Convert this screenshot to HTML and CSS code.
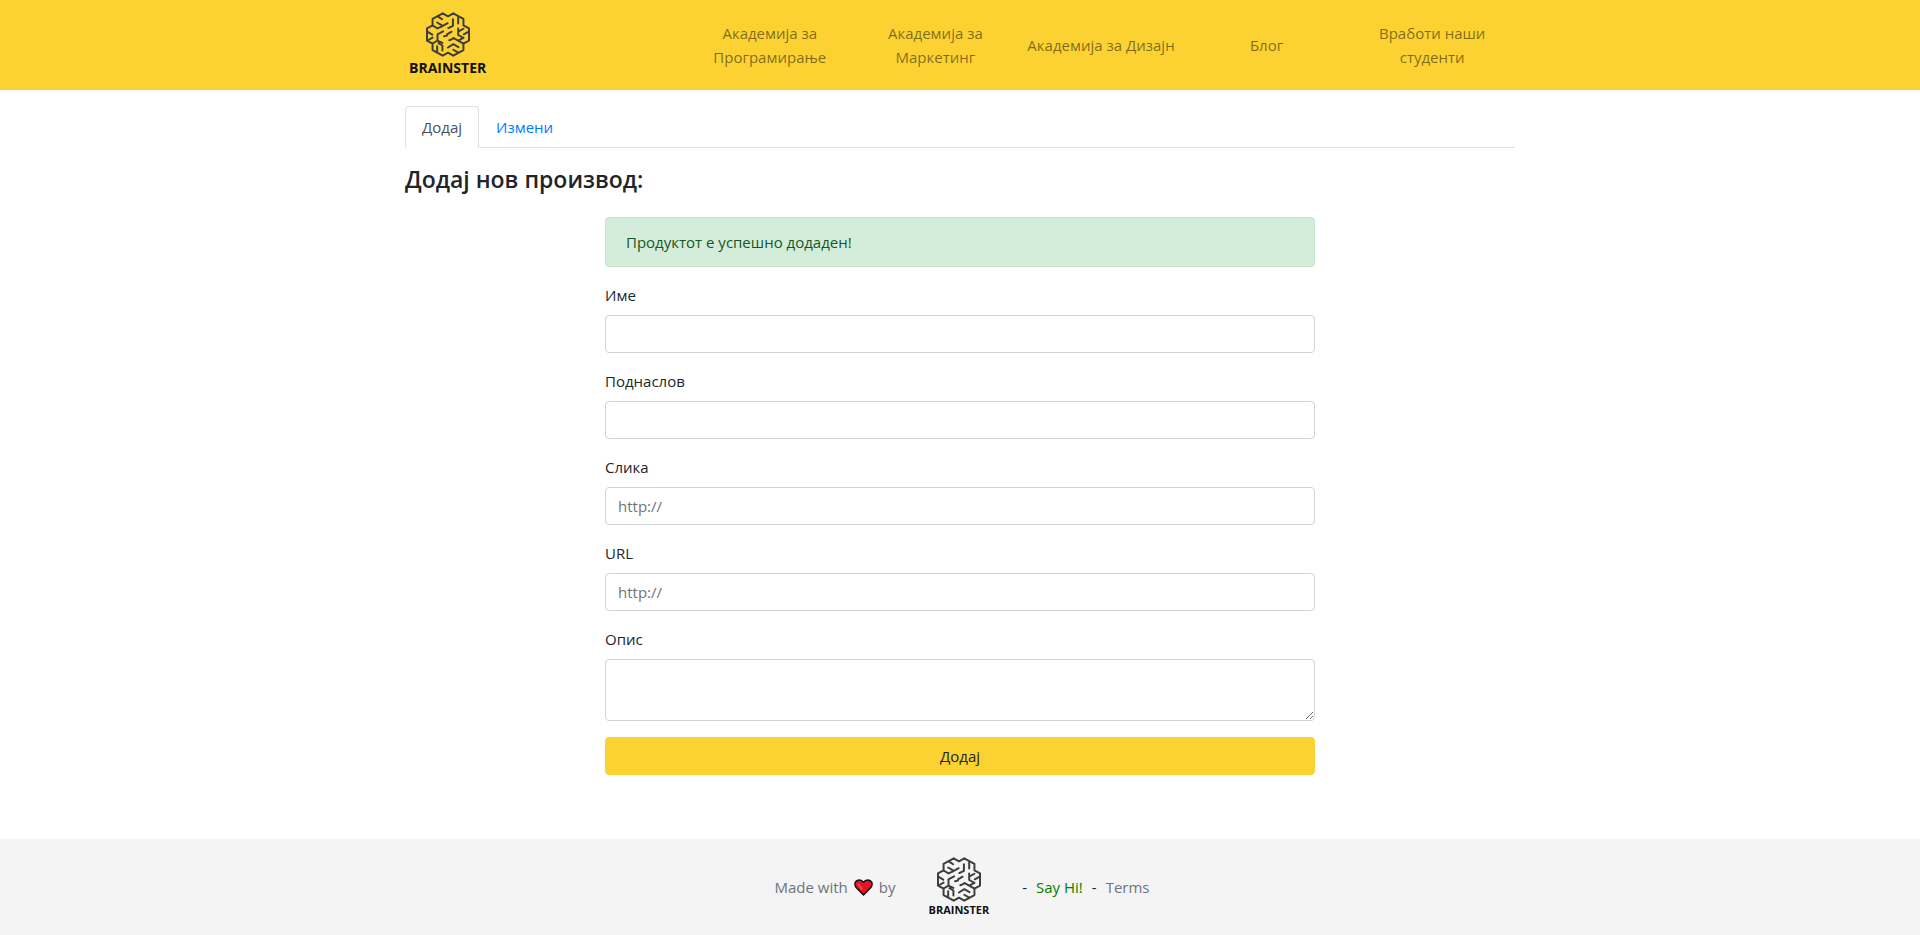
FILE: index.html
```html
<!DOCTYPE html>
<html lang="mk">
<head>
<meta charset="utf-8">
<meta name="viewport" content="width=device-width, initial-scale=1">
<title>Brainster</title>
<link rel="stylesheet" href="styles.css">
</head>
<body>
<svg class="sprite" aria-hidden="true">
  <symbol id="brain" viewBox="5 7 134 135">
    <g fill="none" stroke="#3d3d3b" stroke-width="6" stroke-linejoin="round" stroke-linecap="round">
      <path d="M56 10l16 9 16-9 31 17v20l17 9v37l-17 9v20l-31 17-16-9-16 9-31-17v-20l-17-9V56l17-9V27z"/>
      <path d="M42 20l12 8M39 38l17 10 15-8M87 28v20l-14 7M103 22v19M25 47l15 9 14-6M9 66l15 9M25 84l-14 8M25 102l15-9V74l17-9M40 93l15 7M60 80l9-2M69 74l14-8M119 57l-16 9V56M103 66v10l16 9M135 66l-15 8M119 102l-16-9 16-8M103 93l-15-8M76 92l10-4M39 110v17M55 123v-15l-12-7M72 114l16-10 16 9M88 121l14 8"/>
    </g>
  </symbol>
</svg>
<header class="topbar">
  <nav class="container topbar-inner">
    <a class="brand" href="#"><svg class="brain"><use href="#brain"/></svg><span>BRAINSTER</span></a>
    <ul class="menu">
      <li><a href="#">Академија за Програмирање</a></li>
      <li><a href="#">Академија за Маркетинг</a></li>
      <li><a href="#">Академија за Дизајн</a></li>
      <li><a href="#">Блог</a></li>
      <li><a href="#">Вработи наши студенти</a></li>
    </ul>
  </nav>
</header>
<main class="container content">
  <nav class="tabs">
    <a class="tab active" href="#">Додај</a>
    <a class="tab" href="#">Измени</a>
  </nav>
  <h1 class="title">Додај нов производ:</h1>
  <form class="form">
    <div class="alert" role="status">Продуктот е успешно додаден!</div>
    <div class="field"><label for="name">Име</label><input id="name" type="text"></div>
    <div class="field"><label for="subtitle">Поднаслов</label><input id="subtitle" type="text"></div>
    <div class="field"><label for="image">Слика</label><input id="image" type="url" placeholder="http://"></div>
    <div class="field"><label for="url">URL</label><input id="url" type="url" placeholder="http://"></div>
    <div class="field"><label for="description">Опис</label><textarea id="description" rows="2"></textarea></div>
    <button class="submit" type="button">Додај</button>
  </form>
</main>
<footer class="footer">
  <span class="muted made">Made with
    <svg class="heart" viewBox="0 0 18 16" role="img" aria-label="love"><path d="M9 15L2 8Q0 5 1.500 2.500Q3 .8 5 .8Q7.500 .8 9 3Q10.500 .8 13 .8Q15 .8 16.500 2.500Q18 5 16 8z" fill="#e81224" stroke="#111" stroke-width="1.400" stroke-linejoin="round"/><path d="M4 4.500l3.500 5" stroke="#f4655a" stroke-width="1.200" stroke-linecap="round"/></svg>
    by</span>
  <a class="brand small" href="#"><svg class="brain"><use href="#brain"/></svg><span>BRAINSTER</span></a>
  <span class="links"><span>-</span><a class="hi" href="#">Say Hi!</a><span>-</span><a class="muted" href="#">Terms</a></span>
</footer>
</body>
</html>
```
FILE: styles.css
```css
* { box-sizing: border-box; }
body {
  margin: 0;
  min-height: 100vh;
  display: flex;
  flex-direction: column;
  font: 15px/24px "Segoe UI", "Open Sans", "Noto Sans", sans-serif;
  color: #212529;
  background: #fff;
}
a { color: #007bff; text-decoration: none; }
.sprite { position: absolute; width: 0; height: 0; }
.container { width: 100%; max-width: 1140px; margin: 0 auto; padding: 0 15px; }
.topbar { background: #fcd232; }
.topbar-inner { display: flex; align-items: center; justify-content: space-between; min-height: 90px; }
.brand {
  display: flex;
  flex-direction: column;
  align-items: center;
  padding: 0 4px;
  font-size: 14px;
  font-weight: 700;
  color: #111;
}
.brain { width: 44px; height: 45px; display: block; }
.brand span { line-height: 20px; padding-top: 1px; }
.menu { display: flex; width: 828px; margin: 0; padding: 0; list-style: none; align-items: center; }
.menu li { flex: 1 1 0; text-align: center; }
.menu a { display: block; padding: 8px 6px; color: rgba(0, 0, 0, .5); }
.tabs { display: flex; margin-top: 16px; border-bottom: 1px solid #dee2e6; }
.tab { padding: 8px 16px; border: 1px solid transparent; border-radius: 4px 4px 0 0; margin-bottom: -1px; }
.tab.active { color: #495057; background: #fff; border-color: #dee2e6 #dee2e6 #fff; }
.title { margin: 17px 0 23px; font-size: 23px; line-height: 29px; font-weight: 600; }
.form { width: calc(66.6667% - 30px); margin: 0 auto; }
.alert {
  padding: 12px 20px;
  margin-bottom: 16px;
  color: #155724;
  background: #d4edda;
  border: 1px solid #c3e6cb;
  border-radius: 4px;
}
.field { margin-bottom: 16px; }
.field label { display: block; margin-bottom: 8px; }
.field input, .field textarea {
  display: block;
  width: 100%;
  padding: 6px 12px;
  font: inherit;
  color: #495057;
  background: #fff;
  border: 1px solid #ced4da;
  border-radius: 4px;
}
.field input { height: 38px; }
.field textarea { height: 62px; resize: vertical; }
.field input::placeholder { color: #6c757d; opacity: 1; }
.submit {
  display: block;
  width: 100%;
  padding: 6px 12px;
  font: inherit;
  color: #212529;
  background: #fcd232;
  border: 1px solid #fcd232;
  border-radius: 4px;
}
.footer {
  margin-top: auto;
  min-height: 96px;
  padding-left: 4px;
  display: flex;
  align-items: center;
  justify-content: center;
  background: #f4f4f4;
}
.muted { color: #6c757d; }
.made { display: flex; align-items: center; gap: 6px; }
.heart { width: 19px; height: 17px; }
.small { margin: 0 29px; font-size: 11px; }
.small span { line-height: 16px; padding-top: 0; }
.links { display: flex; gap: 9px; }
.hi { color: #008000; }
```
